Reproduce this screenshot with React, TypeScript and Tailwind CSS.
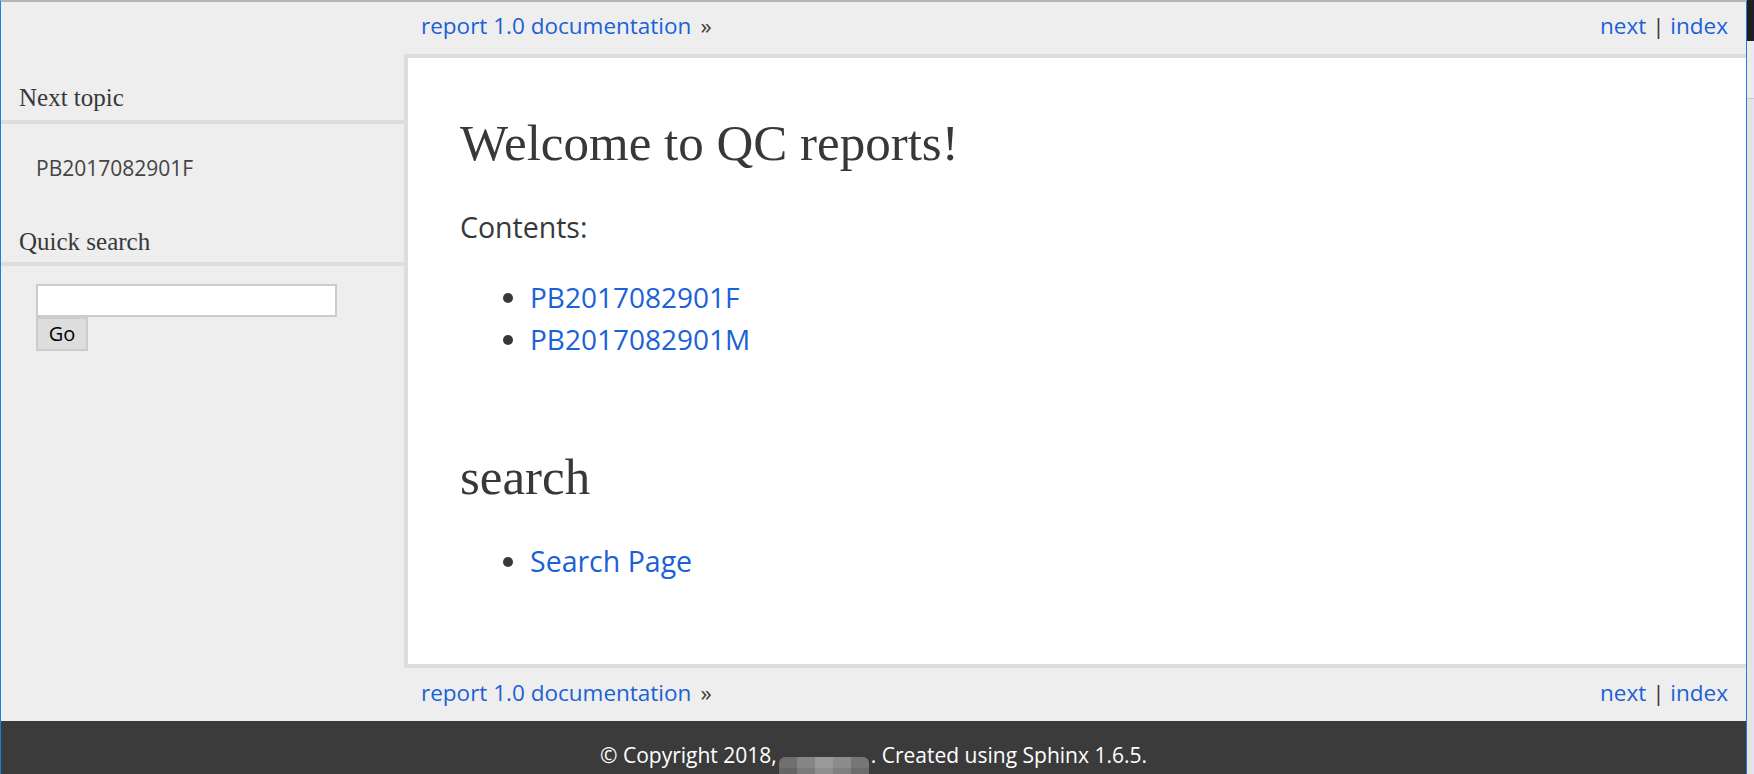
import React from "react";

function Relbar({ top }: { top: boolean }) {
  return (
    <div
      className={`shrink-0 flex justify-between items-start pl-[420px] pr-[18px] text-[22.5px] leading-[30px] text-[#373839] ${
        top ? "h-[52px] pt-[9px]" : "h-[53px] pt-[10px]"
      }`}
    >
      <div>
        <a className="text-[#1b61d6]">report 1.0 documentation</a>
        <span className="ml-[9px]">&raquo;</span>
      </div>
      <div>
        <a className="text-[#1b61d6]">next</a> | <a className="text-[#1b61d6]">index</a>
      </div>
    </div>
  );
}

function Mosaic() {
  const rows = [
    ["#6f6f6f", "#858585", "#9a9a9a", "#8c8c8c", "#767676"],
    ["#656565", "#7b7b7b", "#8e8e8e", "#808080", "#6c6c6c"],
  ];
  return (
    <span className="inline-flex flex-col align-[-5px] mx-[2px] rounded-[6px] overflow-hidden blur-[0.6px]">
      {rows.map((r, i) => (
        <span key={i} className="flex">
          {r.map((c, j) => (
            <span key={j} className="block w-[18px] h-[11px]" style={{ backgroundColor: c }} />
          ))}
        </span>
      ))}
    </span>
  );
}

export default function App() {
  return (
    <div className="w-[1754px] h-[774px] flex overflow-hidden bg-[#eeeeee] font-['Open_Sans',sans-serif]">
      <div className="w-[1747px] h-[774px] shrink-0 flex flex-col border-l border-r border-[#1a7fe0] border-t-2 border-t-[#b5b5b5]">
        <Relbar top />
        <div className="shrink-0 flex h-[614px]">
          <aside className="w-[403px] shrink-0">
            <h3 className="pt-[29px] pb-[7px] pl-[18px] font-['Liberation_Serif',serif] text-[25px] leading-[30px] text-[#373839] border-b-4 border-[#dddddd]">
              Next topic
            </h3>
            <p className="mt-[30px] pl-[35px] text-[21px] leading-[28px] text-[#444444]">PB2017082901F</p>
            <h3 className="mt-[45px] pb-[5px] pl-[18px] font-['Liberation_Serif',serif] text-[25px] leading-[30px] text-[#373839] border-b-4 border-[#dddddd]">
              Quick search
            </h3>
            <div className="mt-[18px] pl-[35px] flex flex-col items-start">
              <input
                type="text"
                className="w-[301px] h-[33px] bg-white border-2 border-[#cccccc] outline-none"
              />
              <button className="w-[52px] h-[34px] bg-[#dddddd] border-2 border-[#cccccc] text-[20px] leading-[26px] text-black font-['Open_Sans',sans-serif]">
                Go
              </button>
            </div>
          </aside>
          <main className="flex-1 h-[614px] bg-white border-l-4 border-t-4 border-b-4 border-[#dddddd] pl-[52px] pt-[55px] text-[#373839]">
            <h1 className="font-['Liberation_Serif',serif] text-[51px] leading-[60px]">Welcome to QC reports!</h1>
            <p className="mt-[33px] text-[28.5px] leading-[42px]">Contents:</p>
            <ul className="mt-[28px] pl-[70px] list-disc text-[28px] leading-[42px]">
              <li>
                <a className="text-[#1b61d6]">PB2017082901F</a>
              </li>
              <li>
                <a className="text-[#1b61d6]">PB2017082901M</a>
              </li>
            </ul>
            <h1 className="mt-[87px] font-['Liberation_Serif',serif] text-[51px] leading-[60px]">search</h1>
            <ul className="mt-[33px] pl-[70px] list-disc text-[28.5px] leading-[42px]">
              <li>
                <a className="text-[#1b61d6]">Search Page</a>
              </li>
            </ul>
          </main>
        </div>
        <Relbar top={false} />
        <footer className="shrink-0 h-[53px] bg-[#3b3b3b] text-white text-center text-[21px] leading-[28px] pt-[20px]">
          © Copyright 2018,
          <Mosaic />. Created using Sphinx 1.6.5.
        </footer>
      </div>
      <div className="flex-1 flex flex-col">
        <div className="h-[41px] bg-[#1f1f1f]" />
        <div className="h-[57px] bg-[#ececec]" />
        <div className="flex-1 bg-[#e4e4e4] border-t border-[#c8c8c8]" />
      </div>
    </div>
  );
}
